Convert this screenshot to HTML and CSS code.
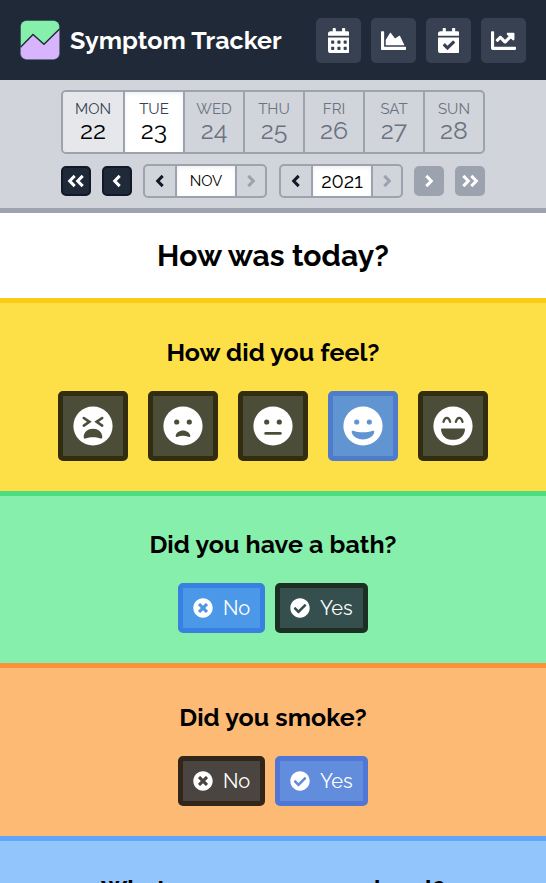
FILE: index.html
```html
<!DOCTYPE html>
<html lang="en">
<head>
<meta charset="utf-8">
<title>Symptom Tracker</title>
<link rel="stylesheet" href="styles.css">
</head>
<body>
<svg class="defs" width="0" height="0">
  <defs>
    <symbol id="left" viewBox="0 0 14 14"><path d="M9.700 1.900 4.700 7 9.700 12.100" class="chev"/></symbol>
    <symbol id="right" viewBox="0 0 14 14"><path d="M4.300 1.900 9.300 7 4.300 12.100" class="chev"/></symbol>
    <symbol id="times" viewBox="0 0 512 512"><path d="M256 8C119 8 8 119 8 256s111 248 248 248 248-111 248-248S393 8 256 8zm121.6 313.1c4.7 4.7 4.7 12.3 0 17L338 377.6c-4.7 4.7-12.3 4.7-17 0L256 312l-65.1 65.6c-4.7 4.7-12.3 4.7-17 0L134.4 338c-4.7-4.7-4.7-12.3 0-17l65.6-65-65.6-65.1c-4.7-4.7-4.7-12.3 0-17l39.6-39.6c4.7-4.7 12.3-4.7 17 0l65 65.7 65.1-65.6c4.7-4.7 12.3-4.7 17 0l39.6 39.6c4.7 4.7 4.7 12.3 0 17L312 256l65.6 65.1z"/></symbol>
    <symbol id="check" viewBox="0 0 512 512"><path d="M504 256c0 136.967-111.033 248-248 248S8 392.967 8 256 119.033 8 256 8s248 111.033 248 248zM227.314 387.314l184-184c6.248-6.248 6.248-16.379 0-22.627l-22.627-22.627c-6.248-6.249-16.379-6.249-22.628 0L216 308.118l-70.059-70.059c-6.248-6.248-16.379-6.248-22.628 0l-22.627 22.627c-6.248 6.248-6.248 16.379 0 22.627l104 104c6.249 6.249 16.379 6.249 22.628.001z"/></symbol>
  </defs>
</svg>

<header class="top">
  <svg class="logo" viewBox="0 0 40 40">
    <rect x=".5" y=".5" width="39" height="39" rx="6" fill="#86efac"/>
    <path d="M.5 27 13 14.3 24 24.3 39.5 9V33.5a6 6 0 0 1-6 6h-27a6 6 0 0 1-6-6z" fill="#d8b4fe"/>
    <path d="M.5 27.2 13 14.5 24 24.3 39.5 9" fill="none" stroke="#1f2937" stroke-width="1.4"/>
    <rect x=".5" y=".5" width="39" height="39" rx="6" fill="none" stroke="#1f2937" stroke-opacity=".5" stroke-width=".8"/>
  </svg>
  <h1 class="brand">Symptom Tracker</h1>
  <nav class="menu">
    <a class="menu-item"><svg viewBox="0 0 448 512"><path d="M0 464c0 26.5 21.5 48 48 48h352c26.5 0 48-21.5 48-48V192H0v272zm320-196c0-6.6 5.4-12 12-12h40c6.6 0 12 5.4 12 12v40c0 6.6-5.4 12-12 12h-40c-6.6 0-12-5.4-12-12v-40zm0 128c0-6.6 5.4-12 12-12h40c6.6 0 12 5.4 12 12v40c0 6.6-5.4 12-12 12h-40c-6.6 0-12-5.4-12-12v-40zM192 268c0-6.6 5.4-12 12-12h40c6.6 0 12 5.4 12 12v40c0 6.6-5.4 12-12 12h-40c-6.6 0-12-5.4-12-12v-40zm0 128c0-6.6 5.4-12 12-12h40c6.6 0 12 5.4 12 12v40c0 6.6-5.4 12-12 12h-40c-6.6 0-12-5.4-12-12v-40zM64 268c0-6.6 5.4-12 12-12h40c6.6 0 12 5.4 12 12v40c0 6.6-5.4 12-12 12H76c-6.6 0-12-5.4-12-12v-40zm0 128c0-6.6 5.4-12 12-12h40c6.6 0 12 5.4 12 12v40c0 6.6-5.4 12-12 12H76c-6.6 0-12-5.4-12-12v-40zM400 64h-48V16c0-8.8-7.2-16-16-16h-32c-8.8 0-16 7.2-16 16v48H160V16c0-8.8-7.2-16-16-16h-32c-8.8 0-16 7.2-16 16v48H48C21.5 64 0 85.5 0 112v48h448v-48c0-26.5-21.5-48-48-48z"/></svg></a>
    <a class="menu-item"><svg viewBox="0 0 512 512"><path d="M500 384c6.6 0 12 5.4 12 12v40c0 6.6-5.4 12-12 12H12c-6.6 0-12-5.4-12-12V76c0-6.6 5.4-12 12-12h40c6.6 0 12 5.4 12 12v308h436zM372.7 159.5L288 216l-85.3-113.7c-5.1-6.8-15.5-6.3-19.9 1L96 248v104h384l-89.9-187.8c-3.2-6.5-11.4-8.7-17.4-4.7z"/></svg></a>
    <a class="menu-item"><svg viewBox="0 0 448 512"><path d="M436 160H12c-6.627 0-12-5.373-12-12v-36c0-26.51 21.49-48 48-48h48V12c0-6.627 5.373-12 12-12h40c6.627 0 12 5.373 12 12v52h128V12c0-6.627 5.373-12 12-12h40c6.627 0 12 5.373 12 12v52h48c26.51 0 48 21.49 48 48v36c0 6.627-5.373 12-12 12zM12 192h424c6.627 0 12 5.373 12 12v260c0 26.51-21.49 48-48 48H48c-26.51 0-48-21.49-48-48V204c0-6.627 5.373-12 12-12zm333.296 95.947l-28.169-28.398c-4.667-4.705-12.265-4.736-16.97-.068L194.12 364.665l-45.98-46.352c-4.667-4.705-12.266-4.736-16.971-.068l-28.397 28.17c-4.705 4.667-4.736 12.265-.068 16.97l82.601 83.269c4.667 4.705 12.265 4.736 16.97.068l142.953-141.805c4.705-4.667 4.736-12.265.068-16.97z"/></svg></a>
    <a class="menu-item"><svg viewBox="0 0 512 512"><path d="M496 384H64V80c0-8.84-7.16-16-16-16H16C7.16 64 0 71.16 0 80v336c0 17.67 14.33 32 32 32h464c8.84 0 16-7.16 16-16v-32c0-8.84-7.16-16-16-16zM464 96H345.94c-21.38 0-32.09 25.85-16.97 40.97l32.4 32.4L288 242.75l-73.37-73.37c-12.5-12.5-32.76-12.5-45.25 0l-68.69 68.69c-6.25 6.25-6.25 16.38 0 22.63l22.62 22.62c6.25 6.25 16.38 6.25 22.63 0L192 237.25l73.37 73.37c12.5 12.5 32.76 12.5 45.25 0l96-96 32.4 32.4c15.12 15.12 40.97 4.41 40.97-16.97V112c.01-8.84-7.15-16-15.99-16z"/></svg></a>
  </nav>
</header>

<section class="dates">
  <div class="week">
    <a class="day past"><span class="name">MON</span><span class="num">22</span></a>
    <a class="day today"><span class="name">TUE</span><span class="num">23</span></a>
    <a class="day"><span class="name">WED</span><span class="num">24</span></a>
    <a class="day"><span class="name">THU</span><span class="num">25</span></a>
    <a class="day"><span class="name">FRI</span><span class="num">26</span></a>
    <a class="day"><span class="name">SAT</span><span class="num">27</span></a>
    <a class="day"><span class="name">SUN</span><span class="num">28</span></a>
  </div>
  <div class="steps">
    <a class="jump"><svg><use href="#left" x="-4"/><use href="#left" x="4"/></svg></a>
    <a class="jump"><svg><use href="#left"/></svg></a>
    <div class="picker month">
      <a><svg><use href="#left"/></svg></a><span class="value">NOV</span><a class="off"><svg><use href="#right"/></svg></a>
    </div>
    <div class="picker year">
      <a><svg><use href="#left"/></svg></a><span class="value">2021</span><a class="off"><svg><use href="#right"/></svg></a>
    </div>
    <a class="jump off"><svg><use href="#right"/></svg></a>
    <a class="jump off"><svg><use href="#right" x="-4"/><use href="#right" x="4"/></svg></a>
  </div>
</section>

<main>
  <h2 class="title">How was today?</h2>

  <section class="question yellow">
    <h3>How did you feel?</h3>
    <div class="faces">
      <a class="face"><svg viewBox="-20 -20 40 40"><circle r="19.6"/><path class="cut" d="M-9.2-8-3.6-4.2-9.2-.4M9.2-8 3.6-4.2 9.2-.4"/><path class="hole" d="M0 2.7C-5 2.7-9.4 6-9.3 11c0 1.4.7 1.9 1.9 1.4C-3 10.8 3 10.8 7.4 12.4c1.2.5 1.900 0 1.900-1.400C9.4 6 5 2.7 0 2.7z"/></svg></a>
      <a class="face"><svg viewBox="-20 -20 40 40"><circle r="19.6"/><g class="hole"><circle cx="-6.3" cy="-4" r="2.6"/><circle cx="6.3" cy="-4" r="2.6"/><path d="M0 4.500c-3.500 0-7 2.300-7.300 5.200-.1 1.200.9 1.500 2 1 3-1.300 7.600-1.300 10.600 0 1.100.5 2.100.2 2-1C7 6.800 3.500 4.500 0 4.500z"/></g></svg></a>
      <a class="face"><svg viewBox="-20 -20 40 40"><circle r="19.6"/><g class="hole"><circle cx="-6.3" cy="-4" r="2.6"/><circle cx="6.3" cy="-4" r="2.6"/><rect x="-8.7" y="6" width="17.4" height="2.7" rx="1.3"/></g></svg></a>
      <a class="face selected"><svg viewBox="-20 -20 40 40"><circle r="19.6"/><g class="hole"><circle cx="-6.3" cy="-4" r="2.6"/><circle cx="6.3" cy="-4" r="2.6"/><path d="M-9.7 4.8c6 2 13.4 2 19.4 0 1-.3 1.800.3 1.600 1.300C10.5 10.8 5 13.6 0 13.6S-10.5 10.8-11.3 6.1c-.2-1 .6-1.600 1.600-1.300z"/></g></svg></a>
      <a class="face"><svg viewBox="-20 -20 40 40"><circle r="19.6"/><path class="cut arc" d="M-9.500-4.200c1.400-5.200 5.200-5.200 6.600 0M2.900-4.200c1.400-5.200 5.200-5.200 6.600 0"/><path class="hole" d="M-10.8 2.500h21.600c.8 0 1.300.5 1.200 1.300C11.2 10 6.500 13.800 2 13.800h-4C-6.500 13.800-11.200 10-12 3.800c-.1-.8.4-1.300 1.200-1.300z"/></svg></a>
    </div>
  </section>

  <section class="question green">
    <h3>Did you have a bath?</h3>
    <div class="answers">
      <a class="answer no selected"><svg><use href="#times"/></svg><span>No</span></a>
      <a class="answer yes"><svg><use href="#check"/></svg><span>Yes</span></a>
    </div>
  </section>

  <section class="question orange">
    <h3>Did you smoke?</h3>
    <div class="answers">
      <a class="answer no"><svg><use href="#times"/></svg><span>No</span></a>
      <a class="answer yes selected"><svg><use href="#check"/></svg><span>Yes</span></a>
    </div>
  </section>

  <section class="question blue">
    <h3>What was your energy level?</h3>
  </section>
</main>
</body>
</html>
```

FILE: styles.css
```css
* { box-sizing: border-box; }
html { height: 100%; overflow: hidden; }
body {
  margin: 0;
  height: 883px;
  overflow: hidden;
  background: #fff;
  color: #000;
  font-family: Raleway, Lato, sans-serif;
  font-size: 20px;
}
h1, h2, h3 { margin: 0; font-weight: 700; letter-spacing: .06px; white-space: nowrap; }
.defs { display: none; }

.top {
  display: flex;
  align-items: center;
  height: 80px;
  padding: 0 20px;
  background: #1f2937;
  color: #fff;
}
.logo { width: 40px; height: 40px; margin-right: 10px; }
.brand { font-size: 25px; line-height: 40px; }
.menu { display: flex; gap: 10px; margin-left: auto; }
.menu-item {
  display: flex;
  align-items: center;
  justify-content: center;
  width: 45px;
  height: 45px;
  border-radius: 5px;
  background: #374151;
}
.menu-item svg { height: 25px; fill: #fff; }

.dates {
  height: 133px;
  padding-top: 10px;
  border-bottom: 5px solid #9ca3af;
  background: #d1d5db;
}
.week {
  display: flex;
  width: 424px;
  height: 64px;
  margin: 0 auto;
  border: 2px solid #9ca3af;
  border-radius: 5px;
  overflow: hidden;
}
.day {
  display: flex;
  flex-direction: column;
  align-items: center;
  width: 60px;
  padding-top: 7px;
  border-left: 2px solid #9ca3af;
  color: #6b7280;
}
.day:first-child { border-left: 0; }
.day .name { font-size: 15px; line-height: 20px; }
.day .num { font-size: 25px; line-height: 23px; }
.past { background: #e5e7eb; color: #000; }
.today { background: #fff; color: #000; box-shadow: inset 0 2px 4px rgba(0, 0, 0, .06); }
.past .name, .today .name { color: #374151; }

.steps {
  display: flex;
  align-items: center;
  width: 424px;
  height: 34px;
  margin: 10px auto 0;
}
.steps svg { width: 14px; height: 14px; overflow: visible; color: #111827; }
.steps use { width: 14px; height: 14px; }
.chev { fill: none; stroke: currentColor; stroke-width: 3; }
.jump {
  display: flex;
  align-items: center;
  justify-content: center;
  width: 30px;
  height: 30px;
  margin-right: 11px;
  border: 2px solid #111827;
  border-radius: 5px;
  background: #1f2937;
}
.steps .jump svg { color: #fff; }
.jump.off { margin: 0 0 0 11px; border-color: #9ca3af; background: #9ca3af; }
.picker {
  display: flex;
  width: 124px;
  height: 34px;
  border: 2px solid #9ca3af;
  border-radius: 5px;
}
.picker a { display: flex; align-items: center; justify-content: center; width: 30px; }
.picker .off { width: 28px; }
.steps .picker .off svg { color: #9ca3af; }
.value {
  display: flex;
  align-items: center;
  justify-content: center;
  width: 62px;
  border: solid #9ca3af;
  border-width: 0 2px;
  background: #fff;
  box-shadow: inset 0 2px 4px rgba(0, 0, 0, .06);
  font-size: 15px;
}
.year { margin-left: 12px; }
.year .value { font-size: 20px; }

.title { height: 85.4px; padding-top: 20px; font-size: 30px; line-height: 45px; text-align: center; }
.question { padding: 30.2px 0 30px; border-top: 5px solid; text-align: center; }
.question h3 { margin-bottom: 19.8px; font-size: 25px; line-height: 37.5px; }
.yellow { border-color: #facc15; background: #fde047; }
.green { border-color: #4ade80; background: #86efac; }
.orange { border-color: #fb923c; background: #fdba74; }
.blue { border-color: #60a5fa; background: #93c5fd; }

.faces { display: flex; justify-content: center; gap: 20px; }
.face {
  display: flex;
  align-items: center;
  justify-content: center;
  width: 70px;
  height: 70px;
  border: 5px solid #322d0e;
  border-radius: 5px;
  background: #4b4d39;
  color: #4b4d39;
}
.face svg { width: 40px; height: 40px; fill: #fff; }
.face.selected { border-color: #4f7bcc; background: #6195d2; color: #6195d2; }
.face .hole { fill: currentColor; }
.face .cut { fill: none; stroke: currentColor; stroke-width: 2.6; stroke-linecap: round; }
.face .arc { stroke-width: 2.3; }

.answers { display: flex; justify-content: center; gap: 10px; }
.answer {
  display: flex;
  align-items: center;
  height: 50px;
  padding-left: 10px;
  border: 5px solid #1b3022;
  border-radius: 5px;
  background: #354f4e;
  color: #fff;
  font-size: 20px;
}
.answer svg { width: 20px; height: 20px; margin-right: 10px; fill: #fff; }
.no { width: 87px; }
.yes { width: 93px; }
.green .selected { border-color: #3a80e0; background: #4c98e8; }
.orange .answer { border-color: #32251a; background: #4b4541; }
.orange .selected { border-color: #5077d6; background: #628ddc; }
```
